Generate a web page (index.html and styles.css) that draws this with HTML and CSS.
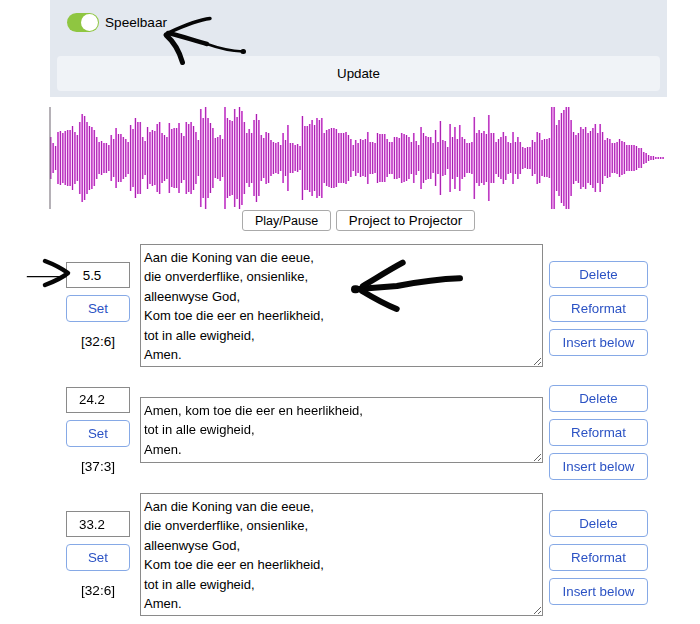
FILE: index.html
```html
<!DOCTYPE html>
<html lang="af">
<head>
<meta charset="utf-8">
<title>Speelbaar</title>
<link rel="stylesheet" href="styles.css">
</head>
<body>
<main class="page">
  <section class="panel">
    <div class="toggle-row">
      <span class="toggle"><span class="knob"></span></span>
      <span>Speelbaar</span>
    </div>
    <button class="update">Update</button>
  </section>

  <svg class="wave" viewBox="-0.3 0 254.5 104" preserveAspectRatio="none" aria-hidden="true">
    <defs>
      <path id="bars" d="M0 31V73M1 37V67M2 40V64M3 26V78M4 25V79M5 27V77M6 25V79M7 24V80M8 24V80M9 20V84M10 26V78M11 29V75M12 16V88M13 8V96M14 10V94M15 16V88M16 20V84M17 21V83M18 24V80M19 31V73M20 36V68M21 35V69M22 37V67M23 37V67M24 39V65M25 29V75M26 33V71M27 22V82M28 28V76M29 28V76M30 31V73M31 33V71M32 36V68M33 19V85M34 23V81M35 12V92M36 16V88M37 16V88M38 31V73M39 35V69M40 21V83M41 26V78M42 24V80M43 25V79M44 18V86M45 16V88M46 27V77M47 29V75M48 31V73M49 17V87M50 23V81M51 22V82M52 22V82M53 17V87M54 27V77M55 30V74M56 16V88M57 18V86M58 16V88M59 20V84M60 26V78M61 34V70M62 3V101M63 12V92M64 1V103M65 12V92M66 17V87M67 22V82M68 32V72M69 31V73M70 29V75M71 33V71M72 1V103M73 12V92M74 14V90M75 15V89M76 3V101M77 11V93M78 1V103M79 5V99M80 16V88M81 27V77M82 23V81M83 27V77M84 14V90M85 8V96M86 14V90M87 29V75M88 32V72M89 26V78M90 27V77M91 34V70M92 36V68M93 37V67M94 36V68M95 39V65M96 27V77M97 34V70M98 19V85M99 37V67M100 37V67M101 39V65M102 38V66M103 40V64M104 10V94M105 20V84M106 20V84M107 18V86M108 14V90M109 19V85M110 12V92M111 14V90M112 12V92M113 27V77M114 24V80M115 23V81M116 22V82M117 22V82M118 23V81M119 27V77M120 27V77M121 27V77M122 26V78M123 29V75M124 33V71M125 39V65M126 34V70M127 37V67M128 33V71M129 34V70M130 33V71M131 26V78M132 36V68M133 36V68M134 37V67M135 27V77M136 28V76M137 28V76M138 28V76M139 33V71M140 36V68M141 36V68M142 31V73M143 31V73M144 32V72M145 27V77M146 28V76M147 29V75M148 31V73M149 36V68M150 27V77M151 35V69M152 39V65M153 21V83M154 27V77M155 30V74M156 31V73M157 31V73M158 37V67M159 24V80M160 36V68M161 15V89M162 34V70M163 35V69M164 41V63M165 18V86M166 31V73M167 21V83M168 33V71M169 19V85M170 31V73M171 33V71M172 37V67M173 37V67M174 36V68M175 11V93M176 27V77M177 24V80M178 27V77M179 25V79M180 28V76M181 9V95M182 27V77M183 27V77M184 36V68M185 33V71M186 31V73M187 26V78M188 30V74M189 36V68M190 37V67M191 26V78M192 36V68M193 31V73M194 36V68M195 41V63M196 42V62M197 41V63M198 41V63M199 34V70M200 36V68M201 26V78M202 27V77M203 34V70M204 33V71M205 33V71M206 32V72M207 1V103M208 1V103M209 19V85M210 14V90M211 7V97M212 4V100M213 1V103M214 1V103M215 14V90M216 26V78M217 29V75M218 27V77M219 21V83M220 23V81M221 21V83M222 27V77M223 25V79M224 22V82M225 18V86M226 27V77M227 18V86M228 26V78M229 34V70M230 32V72M231 33V71M232 37V67M233 37V67M234 36V68M235 33V71M236 35V69M237 36V68M238 39V65M239 39V65M240 39V65M241 39V65M242 40V64M243 42V62M244 42V62M245 46V58M246 47V57M247 49V55M248 50V54M249 50V54M250 51V53M251 51V53M252 51V53M253 51V53"/>
    </defs>
    <use href="#bars" class="bars-glow"/>
    <use href="#bars" class="bars-core"/>
    <path class="cursor" d="M-0.3 1V103"/>
  </svg>

  <div class="player">
    <button class="plain play">Play/Pause</button>
    <button class="plain project">Project to Projector</button>
  </div>

  <section class="verses">
    <article class="verse">
      <div class="left">
        <input class="time" value="5.5">
        <button class="action">Set</button>
        <span class="ref">[32:6]</span>
      </div>
      <textarea class="text six">Aan die Koning van die eeue,
die onverderflike, onsienlike,
alleenwyse God,
Kom toe die eer en heerlikheid,
tot in alle ewigheid,
Amen.</textarea>
      <div class="right">
        <button class="action">Delete</button>
        <button class="action">Reformat</button>
        <button class="action">Insert below</button>
      </div>
    </article>
    <article class="verse">
      <div class="left">
        <input class="time" value="24.2">
        <button class="action">Set</button>
        <span class="ref">[37:3]</span>
      </div>
      <textarea class="text three">Amen, kom toe die eer en heerlikheid,
tot in alle ewigheid,
Amen.</textarea>
      <div class="right">
        <button class="action">Delete</button>
        <button class="action">Reformat</button>
        <button class="action">Insert below</button>
      </div>
    </article>
    <article class="verse">
      <div class="left">
        <input class="time" value="33.2">
        <button class="action">Set</button>
        <span class="ref">[32:6]</span>
      </div>
      <textarea class="text six">Aan die Koning van die eeue,
die onverderflike, onsienlike,
alleenwyse God,
Kom toe die eer en heerlikheid,
tot in alle ewigheid,
Amen.</textarea>
      <div class="right">
        <button class="action">Delete</button>
        <button class="action">Reformat</button>
        <button class="action">Insert below</button>
      </div>
    </article>
  </section>
</main>

<svg class="ink" viewBox="0 0 700 624" aria-hidden="true">
  <path class="stroke s4" d="M210 18.500C196 20 181 27 168 33"/>
  <path class="stroke s3" d="M207 44C218 48 232 51 243 51.500"/>
  <path class="stroke s5" d="M168 33C182 36 195 41 207 44"/>
  <path class="stroke s6" d="M166 35C174 42 179 50 182.500 62.500"/>
  <path class="stroke s7" d="M355 289.300C370 288 385 287 397 286C418 282 440 279 460 278.300"/>
  <path class="stroke s7" d="M402.700 262.700C389 270 375 279 363 286"/>
  <path class="stroke s7" d="M362 291C372 297 384 304 396.700 309"/>
  <path class="stroke s8" d="M355 289.300h1"/>
  <path class="stroke s6" d="M243 51.500h0.500"/>
  <path class="stroke s5" d="M45 261C53 264 61 268 68 273C62 278 53 282 45 285"/>
  <path class="stroke s1" d="M27.300 276.700H66"/>
</svg>
</body>
</html>
```

FILE: styles.css
```css
* {
  box-sizing: border-box;
}

html,
body {
  margin: 0;
  padding: 0;
  background: #fff;
}

body {
  font-family: "Liberation Sans", Arial, sans-serif;
  font-size: 14px;
  color: #000;
}

.page {
  position: relative;
  width: 700px;
  height: 624px;
  overflow: hidden;
}

.panel {
  width: 617px;
  height: 97px;
  margin-left: 50px;
  padding: 13px 7px 0;
  background: #e3e8ef;
}

.toggle-row {
  display: flex;
  align-items: center;
  gap: 6px;
  height: 19px;
  margin-left: 10px;
  font-size: 13.6px;
}

.toggle {
  display: flex;
  justify-content: flex-end;
  width: 32px;
  height: 19px;
  padding: 1px;
  border-radius: 10px;
  background: #8fc641;
}

.knob {
  width: 17px;
  height: 17px;
  border-radius: 50%;
  background: #fff;
}

.update {
  display: block;
  width: 603px;
  height: 35px;
  margin-top: 24px;
  border: 0;
  border-radius: 4px;
  background: #f0f3f7;
  color: #000;
  font: inherit;
  font-size: 13.33px;
}

.wave {
  display: block;
  width: 616px;
  height: 104px;
  margin: 9px 0 0 50px;
  overflow: visible;
}

.bars-glow {
  fill: none;
  stroke: #ef6cec;
  stroke-width: 0.72;
  opacity: 0.8;
}

.bars-core {
  fill: none;
  stroke: #a51fae;
  stroke-width: 0.42;
}

.cursor {
  fill: none;
  stroke: #77707a;
  stroke-width: 0.45;
}

.player {
  display: flex;
  gap: 5px;
  margin: 0 0 0 242px;
}

.plain {
  height: 21px;
  padding: 0;
  border: 1px solid #aaa;
  border-radius: 3px;
  background: #fff;
  color: #000;
  font: inherit;
  font-size: 13.33px;
}

.play {
  width: 89px;
  font-size: 12.5px;
}

.project {
  width: 139px;
}

.verses {
  display: flex;
  flex-direction: column;
  gap: 13px;
  margin-top: 13px;
  padding-left: 66px;
}

.verse {
  display: flex;
  align-items: center;
  width: 582px;
}

.left {
  display: flex;
  flex-direction: column;
  flex: none;
  align-items: stretch;
  width: 64px;
  height: 92px;
}

.time {
  width: 64px;
  height: 26px;
  padding: 0 12px 0 0;
  border: 1px solid #8a8a8a;
  font: inherit;
  font-size: 13.33px;
  color: #000;
  text-align: center;
  border-radius: 0;
}

.left .action {
  margin-top: 7px;
}

.ref {
  margin-top: 12px;
  text-align: center;
  line-height: 16px;
  font-size: 13.6px;
}

.text {
  display: block;
  flex: none;
  width: 403px;
  margin: 0 6px 5px 10px;
  padding: 3px;
  border: 1px solid #8a8a8a;
  border-radius: 0;
  font: inherit;
  font-size: 13px;
  line-height: 19.4px;
  color: #000;
  background: #fff;
  outline: 0;
}

.six {
  height: 123px;
}

.three {
  height: 66px;
}

.right {
  display: flex;
  flex-direction: column;
  flex: none;
  gap: 7px;
  width: 99px;
}

.action {
  height: 27px;
  padding: 0;
  border: 1px solid #86a9e6;
  border-radius: 4px;
  background: #fff;
  color: #2b52c4;
  font: inherit;
  font-size: 13.33px;
}

.ink {
  position: absolute;
  top: 0;
  left: 0;
  width: 700px;
  height: 624px;
  pointer-events: none;
}

.stroke {
  fill: none;
  stroke: #060606;
  stroke-linecap: round;
  stroke-linejoin: round;
}

.s1 {
  stroke-width: 1.2;
}

.s3 {
  stroke-width: 2.5;
}

.s4 {
  stroke-width: 3.5;
}

.s5 {
  stroke-width: 4.5;
}

.s6 {
  stroke-width: 5;
}

.s7 {
  stroke-width: 6;
}

.s8 {
  stroke-width: 8;
}
```
